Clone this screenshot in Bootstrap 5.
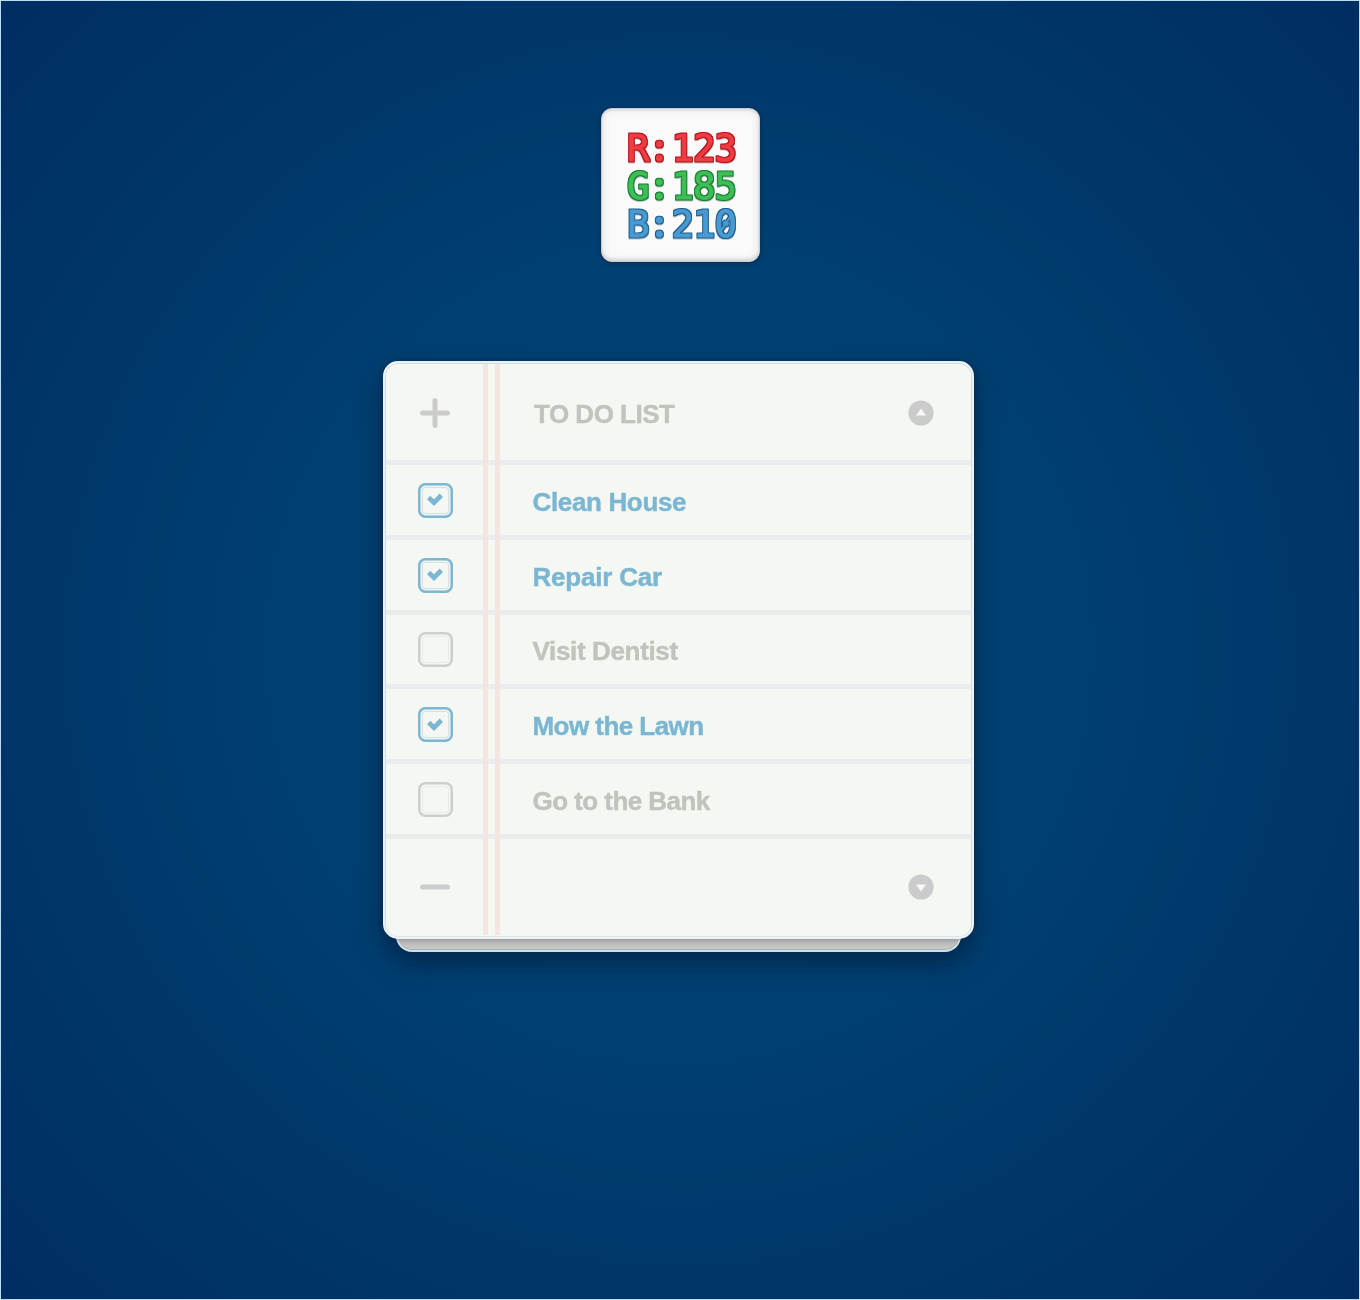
<!DOCTYPE html>
<html lang="en">
<head>
<meta charset="utf-8">
<meta name="viewport" content="width=device-width, initial-scale=1">
<title>To Do List</title>
<link rel="stylesheet" href="https://cdn.jsdelivr.net/npm/bootstrap@5.3.0/dist/css/bootstrap.min.css">
<style>
body{height:1300px;overflow:hidden;border:1px solid #bcdcf0;background:radial-gradient(circle 960px at 679px 649px,#004276 0,#004072 40%,#00366a 70%,#002d62 100%);font-family:"Liberation Sans",Arial,sans-serif}
.page-wrap{padding:107px 0 0}
.logo-tile{width:159px;height:154px;margin-left:600px;border-radius:11px;background:#fafafa;border:1px solid #c9cdd0;box-shadow:inset 0 2px 1px #e2e2e2,inset 0 -2px 3px #d6d6d6,inset 0 0 10px #e2e2e2,0 1px 4px rgba(0,20,50,.5)}
.logo-tile text{font:37.5px "DejaVu Sans Mono",monospace;stroke-width:.8px;stroke-linejoin:round}
.logo-tile .dots{font:bold 38px Lato,sans-serif;stroke-width:1.2px}
.sheet-stack{width:590.5px;margin:99px 0 0 382px;filter:drop-shadow(0 12px 13px rgba(0,15,40,.5))}
.paper{position:relative;z-index:1;height:578px;border:2.5px solid #eaf3f9;border-radius:15px;background:#f5f7f2;box-shadow:0 0 5px rgba(0,20,50,.3);overflow:hidden}
.paper::before{content:"";position:absolute;z-index:1;left:97.5px;top:1px;bottom:2px;width:17px;border:solid #f5e5e0;border-width:0 5px}
.paper::after{content:"";position:absolute;inset:0;border:1px solid rgba(165,190,205,.45);border-bottom-color:#e3e6e4;border-radius:13px}
.back-sheet{height:30px;width:565px;margin:-17px 0 0 13px;border:2px solid #d3dee2;border-top:0;border-radius:0 0 16px 16px;background:linear-gradient(#b0b0ad 55%,#cbcbc7);box-shadow:inset 0 -1px 0 #9eb4bf}
.entry{height:74.8px;border-bottom:5px solid #ebecef;margin:0 1px;color:#c1c3be;font-size:26px;font-weight:700;line-height:30px;letter-spacing:-.35px}
.entry.top-entry{height:102px;letter-spacing:-.5px}
.entry.top-entry svg{position:relative;top:1px}
.entry.end-entry{height:97px;border:0}
.mark-cell{width:98px;flex:none}
.label-cell{padding-left:48.5px;position:relative;top:2px;white-space:nowrap;-webkit-text-stroke:.45px currentColor}
.top-entry .label-cell{padding-left:50px}
.label-cell.snug{letter-spacing:-.55px}
.label-cell.wide{letter-spacing:-.2px}
.done{color:#7bb7d2}
.arrow{margin-right:37px}
.tick{width:35px;height:35px;margin-top:1px;border-radius:7.5px;box-shadow:inset 0 0 0 2.5px #cdcfcd,inset 0 0 0 4px #f5f7f2,inset 0 0 0 5px #e8ebe7}
.done .tick{box-shadow:inset 0 0 0 2.5px #7bb7d2,inset 0 0 0 4px #eef4f3,inset 0 0 0 5px #d8e1e2}
</style>
<script src="https://cdn.jsdelivr.net/npm/bootstrap@5.3.0/dist/js/bootstrap.bundle.min.js"></script>
</head>
<body>
<main class="page-wrap">
<div class="logo-tile">
<svg class="d-block" width="157" height="152" viewBox="602 109 157 152">
<defs>
<filter id="edge-red" x="-10%" y="-10%" width="120%" height="130%" color-interpolation-filters="sRGB"><feMorphology in="SourceAlpha" operator="dilate" radius="1" result="fat"/><feFlood flood-color="#b5101a"/><feComposite in2="fat" operator="in" result="edge"/><feMerge><feMergeNode in="edge"/><feMergeNode in="SourceGraphic"/></feMerge><feDropShadow dx="0" dy="1" stdDeviation=".5" flood-color="#888" flood-opacity=".5"/></filter>
<filter id="edge-green" x="-10%" y="-10%" width="120%" height="130%" color-interpolation-filters="sRGB"><feMorphology in="SourceAlpha" operator="dilate" radius="1" result="fat"/><feFlood flood-color="#147e31"/><feComposite in2="fat" operator="in" result="edge"/><feMerge><feMergeNode in="edge"/><feMergeNode in="SourceGraphic"/></feMerge><feDropShadow dx="0" dy="1" stdDeviation=".5" flood-color="#888" flood-opacity=".5"/></filter>
<filter id="edge-blue" x="-10%" y="-10%" width="120%" height="130%" color-interpolation-filters="sRGB"><feMorphology in="SourceAlpha" operator="dilate" radius="1" result="fat"/><feFlood flood-color="#1c5f92"/><feComposite in2="fat" operator="in" result="edge"/><feMerge><feMergeNode in="edge"/><feMergeNode in="SourceGraphic"/></feMerge><feDropShadow dx="0" dy="1" stdDeviation=".5" flood-color="#888" flood-opacity=".5"/></filter>
</defs>
<g filter="url(#edge-red)"><text x="627 654.500 671.500 693 714.500" y="161" fill="#ee3d42" stroke="#ee3d42">R<tspan class="dots">:</tspan>123</text></g>
<g filter="url(#edge-green)"><text x="627 654.500 671.500 693 714.500" y="199" fill="#3dbf55" stroke="#3dbf55">G<tspan class="dots">:</tspan>185</text></g>
<g filter="url(#edge-blue)"><text x="627 654.500 671.500 693 714.500" y="237" fill="#4a9ad2" stroke="#4a9ad2">B<tspan class="dots">:</tspan>210</text><path d="m720 232.500 11.500-17.500" stroke="#4a9ad2" stroke-width="2"/></g>
</svg>
</div>
<div class="sheet-stack">
<section class="paper">
<div class="entry top-entry d-flex align-items-center">
<div class="mark-cell d-flex justify-content-center"><svg width="30" height="30" stroke="#cbcccb" stroke-width="5" stroke-linecap="round"><path d="M2.5 15h25M15 2.5v25"/></svg></div>
<div class="label-cell">TO DO LIST</div>
<svg class="arrow ms-auto" width="26" height="26"><circle cx="13" cy="13" r="12.6" fill="#cbcbcb"/><path d="M8 15.5 13 8.5l5 7z" fill="#f8faf6"/></svg>
</div>
<div class="entry done d-flex align-items-center"><div class="mark-cell d-flex justify-content-center"><div class="tick d-flex align-items-center justify-content-center"><svg width="16" height="14" fill="none" stroke="#7bb7d2" stroke-width="4.8"><path d="m1.6 4.500 5.400 5.200 7.400-7.400"/></svg></div></div><div class="label-cell">Clean House</div></div>
<div class="entry done d-flex align-items-center"><div class="mark-cell d-flex justify-content-center"><div class="tick d-flex align-items-center justify-content-center"><svg width="16" height="14" fill="none" stroke="#7bb7d2" stroke-width="4.8"><path d="m1.6 4.500 5.400 5.200 7.400-7.400"/></svg></div></div><div class="label-cell wide">Repair Car</div></div>
<div class="entry d-flex align-items-center"><div class="mark-cell d-flex justify-content-center"><div class="tick"></div></div><div class="label-cell">Visit Dentist</div></div>
<div class="entry done d-flex align-items-center"><div class="mark-cell d-flex justify-content-center"><div class="tick d-flex align-items-center justify-content-center"><svg width="16" height="14" fill="none" stroke="#7bb7d2" stroke-width="4.8"><path d="m1.6 4.500 5.400 5.200 7.400-7.400"/></svg></div></div><div class="label-cell snug">Mow the Lawn</div></div>
<div class="entry d-flex align-items-center"><div class="mark-cell d-flex justify-content-center"><div class="tick"></div></div><div class="label-cell snug">Go to the Bank</div></div>
<div class="entry end-entry d-flex align-items-center">
<div class="mark-cell d-flex justify-content-center"><svg width="30" height="30" stroke="#cbcccb" stroke-width="5" stroke-linecap="round"><path d="M2.5 15h25"/></svg></div>
<svg class="arrow ms-auto" width="26" height="26"><circle cx="13" cy="13" r="12.6" fill="#cbcbcb"/><path d="M8 10.5 13 17.5l5-7z" fill="#f8faf6"/></svg>
</div>
</section>
<div class="back-sheet"></div>
</div>
</main>
</body>
</html>
